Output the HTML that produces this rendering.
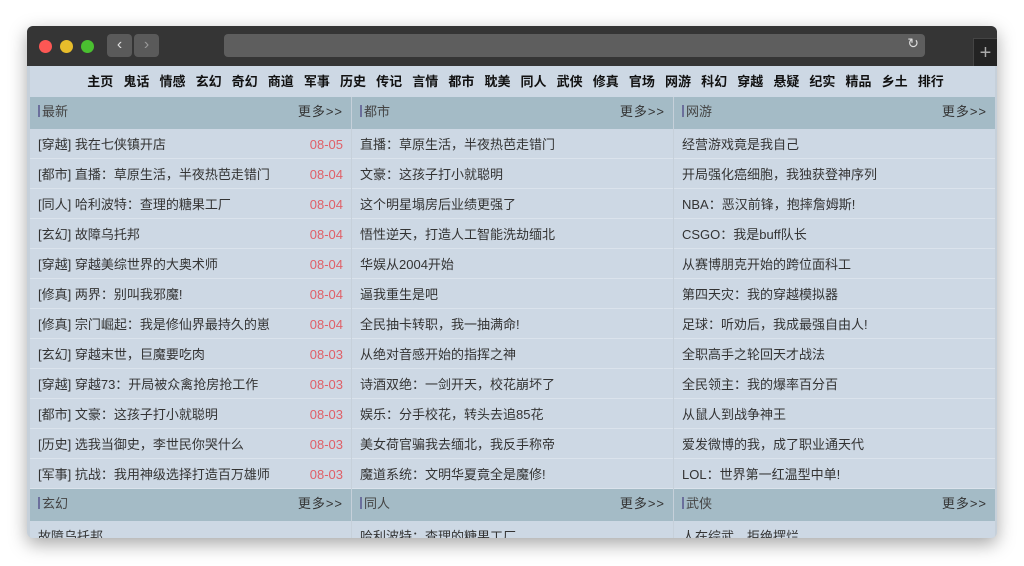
<!DOCTYPE html>
<html><head><meta charset="utf-8"><style>
*{margin:0;padding:0;box-sizing:border-box}
body{width:1024px;height:566px;background:#fff;position:relative;overflow:hidden;font-family:"Liberation Sans","Noto Sans CJK SC",sans-serif}
.win{position:absolute;left:27px;top:26px;width:970px;height:512px;border-radius:6px;overflow:hidden;background:#c6d0da;box-shadow:0 6px 18px rgba(0,0,0,.35)}
.tb{position:absolute;left:0;top:0;width:970px;height:40px;background:#353535}
.dot{position:absolute;top:14px;width:13px;height:13px;border-radius:50%}
.btn{position:absolute;top:8px;width:25px;height:23px;background:#5a5a5a;border-radius:4px;color:#ddd;font-size:16px;text-align:center;line-height:22px}
.url{position:absolute;left:197px;top:8px;width:701px;height:23px;background:#5e5e5e;border-radius:4px}
.plus{position:absolute;left:946px;top:12px;width:24px;height:28px;background:#232323;color:#aaa;font-size:20px;text-align:center;line-height:28px;border-left:1px solid #444;border-top:1px solid #444}
.nav{position:absolute;left:3px;top:40px;width:965px;height:31px;background:#cdd8e4;text-align:center;font-size:13px;font-weight:bold;color:#111;line-height:31px;word-spacing:0;padding-left:6px}
.nav span{margin:0 5.05px}
.col{position:absolute;top:71px;width:321px;height:441px;background:#cdd8e4;overflow:hidden}
.hd{height:32px;background:#a4bbc6;font-size:13px;color:#444;line-height:30px;padding-left:8px;position:relative}
.hd i{display:inline-block;width:2px;height:12px;background:#6b6f9c;margin-right:2px;vertical-align:-1px}
.hd b{position:absolute;right:8px;top:0;font-weight:normal;color:#333;letter-spacing:1px}
.r{height:30px;line-height:32px;font-size:13px;color:#333;padding-left:8px;border-bottom:1px solid #dbe3ec;position:relative;white-space:nowrap}
.r em{position:absolute;right:8px;font-style:normal;color:#e06068}
</style></head><body>
<div class="win">
<div class="tb">
<div class="dot" style="left:12px;background:#fd5754"></div>
<div class="dot" style="left:33px;background:#e7bd2b"></div>
<div class="dot" style="left:54px;background:#4ac030"></div>
<div class="btn" style="left:80px">&#8249;</div>
<div class="btn" style="left:107px;color:#999">&#8250;</div>
<div class="url"><span style="position:absolute;right:6px;top:1px;color:#ddd;font-size:14px">&#8635;</span></div>
<div class="plus">+</div>
</div>
<div class="nav"><span>主页</span><span>鬼话</span><span>情感</span><span>玄幻</span><span>奇幻</span><span>商道</span><span>军事</span><span>历史</span><span>传记</span><span>言情</span><span>都市</span><span>耽美</span><span>同人</span><span>武侠</span><span>修真</span><span>官场</span><span>网游</span><span>科幻</span><span>穿越</span><span>悬疑</span><span>纪实</span><span>精品</span><span>乡土</span><span>排行</span></div>

<div class="col" style="left:3px">
<div class="hd"><i></i>最新<b>更多&gt;&gt;</b></div>
<div class="r">[穿越] 我在七侠镇开店<em>08-05</em></div>
<div class="r">[都市] 直播：草原生活，半夜热芭走错门<em>08-04</em></div>
<div class="r">[同人] 哈利波特：查理的糖果工厂<em>08-04</em></div>
<div class="r">[玄幻] 故障乌托邦<em>08-04</em></div>
<div class="r">[穿越] 穿越美综世界的大奥术师<em>08-04</em></div>
<div class="r">[修真] 两界：别叫我邪魔!<em>08-04</em></div>
<div class="r">[修真] 宗门崛起：我是修仙界最持久的崽<em>08-04</em></div>
<div class="r">[玄幻] 穿越末世，巨魔要吃肉<em>08-03</em></div>
<div class="r">[穿越] 穿越73：开局被众禽抢房抢工作<em>08-03</em></div>
<div class="r">[都市] 文豪：这孩子打小就聪明<em>08-03</em></div>
<div class="r">[历史] 选我当御史，李世民你哭什么<em>08-03</em></div>
<div class="r">[军事] 抗战：我用神级选择打造百万雄师<em>08-03</em></div>
<div class="hd"><i></i>玄幻<b>更多&gt;&gt;</b></div>
<div class="r">故障乌托邦</div>
</div>

<div class="col" style="left:325px">
<div class="hd"><i></i>都市<b>更多&gt;&gt;</b></div>
<div class="r">直播：草原生活，半夜热芭走错门</div>
<div class="r">文豪：这孩子打小就聪明</div>
<div class="r">这个明星塌房后业绩更强了</div>
<div class="r">悟性逆天，打造人工智能洗劫缅北</div>
<div class="r">华娱从2004开始</div>
<div class="r">逼我重生是吧</div>
<div class="r">全民抽卡转职，我一抽满命!</div>
<div class="r">从绝对音感开始的指挥之神</div>
<div class="r">诗酒双绝：一剑开天，校花崩坏了</div>
<div class="r">娱乐：分手校花，转头去追85花</div>
<div class="r">美女荷官骗我去缅北，我反手称帝</div>
<div class="r">魔道系统：文明华夏竟全是魔修!</div>
<div class="hd"><i></i>同人<b>更多&gt;&gt;</b></div>
<div class="r">哈利波特：查理的糖果工厂</div>
</div>

<div class="col" style="left:647px">
<div class="hd"><i></i>网游<b>更多&gt;&gt;</b></div>
<div class="r">经营游戏竟是我自己</div>
<div class="r">开局强化癌细胞，我独获登神序列</div>
<div class="r">NBA：恶汉前锋，抱摔詹姆斯!</div>
<div class="r">CSGO：我是buff队长</div>
<div class="r">从赛博朋克开始的跨位面科工</div>
<div class="r">第四天灾：我的穿越模拟器</div>
<div class="r">足球：听劝后，我成最强自由人!</div>
<div class="r">全职高手之轮回天才战法</div>
<div class="r">全民领主：我的爆率百分百</div>
<div class="r">从鼠人到战争神王</div>
<div class="r">爱发微博的我，成了职业通天代</div>
<div class="r">LOL：世界第一红温型中单!</div>
<div class="hd"><i></i>武侠<b>更多&gt;&gt;</b></div>
<div class="r">人在综武，拒绝摆烂</div>
</div>
</div>
</body></html>
